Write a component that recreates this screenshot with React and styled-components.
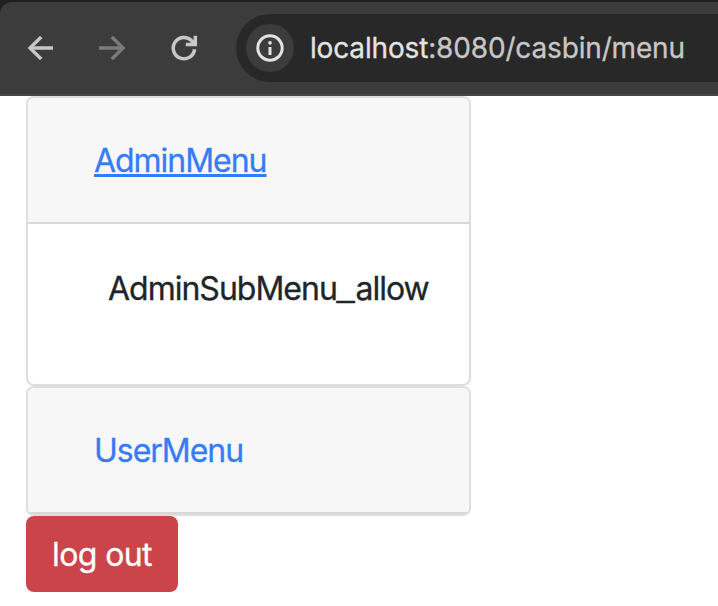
import React from "react";
import styled, { createGlobalStyle } from "styled-components";

const GlobalStyle = createGlobalStyle`
  *, *::before, *::after { box-sizing: border-box; }
  body {
    margin: 0;
    background: #fff;
    color: #212529;
    font: 400 32px/48px Inter, "Liberation Sans", sans-serif;
    -webkit-text-stroke: 0.3px currentColor;
    overflow: hidden;
  }
`;

const BrowserFrame = styled.header`
  height: 96px;
  padding-top: 2px;
  background: #1f2020;
`;

const Toolbar = styled.div`
  display: flex;
  align-items: flex-start;
  height: 94px;
  padding: 12px 0 0 24px;
  background: #3c3c3c;
  border-bottom: 2px solid #474546;
  border-top-left-radius: 12px;
`;

const NavButtons = styled.nav`
  display: flex;
  gap: 40px;
  width: 212px;
  height: 68px;
  align-items: center;
`;

const NavButton = styled.button`
  width: 32px;
  height: 32px;
  padding: 0;
  border: 0;
  background: none;
  color: ${(p) => (p.$muted ? "#7b7b7b" : "#c7c7c7")};

  svg { display: block; }
`;

const AddressBar = styled.div`
  flex: 1;
  display: flex;
  align-items: center;
  gap: 16px;
  height: 68px;
  padding-left: 10px;
  background: #282828;
  border-radius: 34px 0 0 34px;
`;

const SiteInfo = styled.span`
  display: grid;
  place-items: center;
  width: 48px;
  height: 48px;
  border-radius: 50%;
  background: #3c3c3c;
  color: #e3e3e3;
`;

const Url = styled.span`
  font-size: 28px;
  line-height: 40px;
  letter-spacing: -0.16px;
  color: #c7c7c7;
  white-space: nowrap;
`;

const Host = styled.span`
  color: #e3e3e3;
`;

const Page = styled.main`
  display: flex;
  flex-direction: column;
  align-items: flex-start;
  padding-left: 26px;
`;

const Card = styled.section`
  width: 445px;
  border: 2px solid #dedede;
  border-radius: 8px;
  background: #fff;
  overflow: hidden;
`;

const CardHeader = styled.div`
  height: 126px;
  padding: 39px 66px 0;
  background: #f7f7f7;
  border-bottom: 2px solid #d7d7d7;
`;

const MenuLink = styled.a`
  color: #367cf7;
  letter-spacing: -1.03px;
  text-decoration: ${(p) => (p.$active ? "underline" : "none")};
  text-decoration-thickness: 3px;
  text-underline-offset: 2px;
`;

const CardBody = styled.div`
  height: 160px;
  padding: 41px 80px 0;
  letter-spacing: -1px;
  white-space: nowrap;
`;

const WideUnderscore = styled.span`
  font-family: "Liberation Sans", sans-serif;
  line-height: 1;
  letter-spacing: 0.8px;
  vertical-align: 3px;
`;

const LogoutButton = styled.button`
  width: 152px;
  height: 76px;
  padding: 2px 0 0;
  border: 0;
  border-radius: 8px;
  background: #cb444a;
  color: #fff;
  font: inherit;
  letter-spacing: -0.6px;
  -webkit-text-stroke: 0.3px #fff;
`;

const ArrowIcon = ({ forward }) => (
  <svg width="32" height="32" viewBox="0 0 32 32" fill="none" stroke="currentColor" strokeWidth="3.4">
    {forward ? (
      <path d="M3 16H27M15.8 5L27 16L15.8 27" />
    ) : (
      <path d="M29 16H6M17.2 5L6 16L17.2 27" />
    )}
  </svg>
);

const ReloadIcon = () => (
  <svg width="32" height="32" viewBox="0 0 32 32" fill="none" stroke="currentColor" strokeWidth="3.5">
    <path d="M26.6 17.2A10.7 10.7 0 1 1 23.6 8.6L26 11.5" />
    <path d="M27.3 3.7V12.4H17.8" />
    <path d="M22 11.5L26.4 7V11.5Z" fill="currentColor" stroke="none" />
  </svg>
);

const InfoIcon = () => (
  <svg width="28" height="28" viewBox="0 0 28 28" fill="none" stroke="currentColor" strokeWidth="3">
    <circle cx="14" cy="14" r="12.2" />
    <path d="M14 13V21" />
    <circle cx="14" cy="8.9" r="1.8" fill="currentColor" stroke="none" />
  </svg>
);

export default function App() {
  return (
    <>
      <GlobalStyle />
      <BrowserFrame>
        <Toolbar>
          <NavButtons>
            <NavButton aria-label="Back"><ArrowIcon /></NavButton>
            <NavButton aria-label="Forward" $muted><ArrowIcon forward /></NavButton>
            <NavButton aria-label="Reload"><ReloadIcon /></NavButton>
          </NavButtons>
          <AddressBar>
            <SiteInfo><InfoIcon /></SiteInfo>
            <Url><Host>localhost</Host>:8080/casbin/menu</Url>
          </AddressBar>
        </Toolbar>
      </BrowserFrame>
      <Page>
        <Card>
          <CardHeader><MenuLink href="#admin" $active>AdminMenu</MenuLink></CardHeader>
          <CardBody>AdminSubMenu<WideUnderscore>_</WideUnderscore>allow</CardBody>
        </Card>
        <Card>
          <CardHeader><MenuLink href="#user">UserMenu</MenuLink></CardHeader>
        </Card>
        <LogoutButton>log out</LogoutButton>
      </Page>
    </>
  );
}
